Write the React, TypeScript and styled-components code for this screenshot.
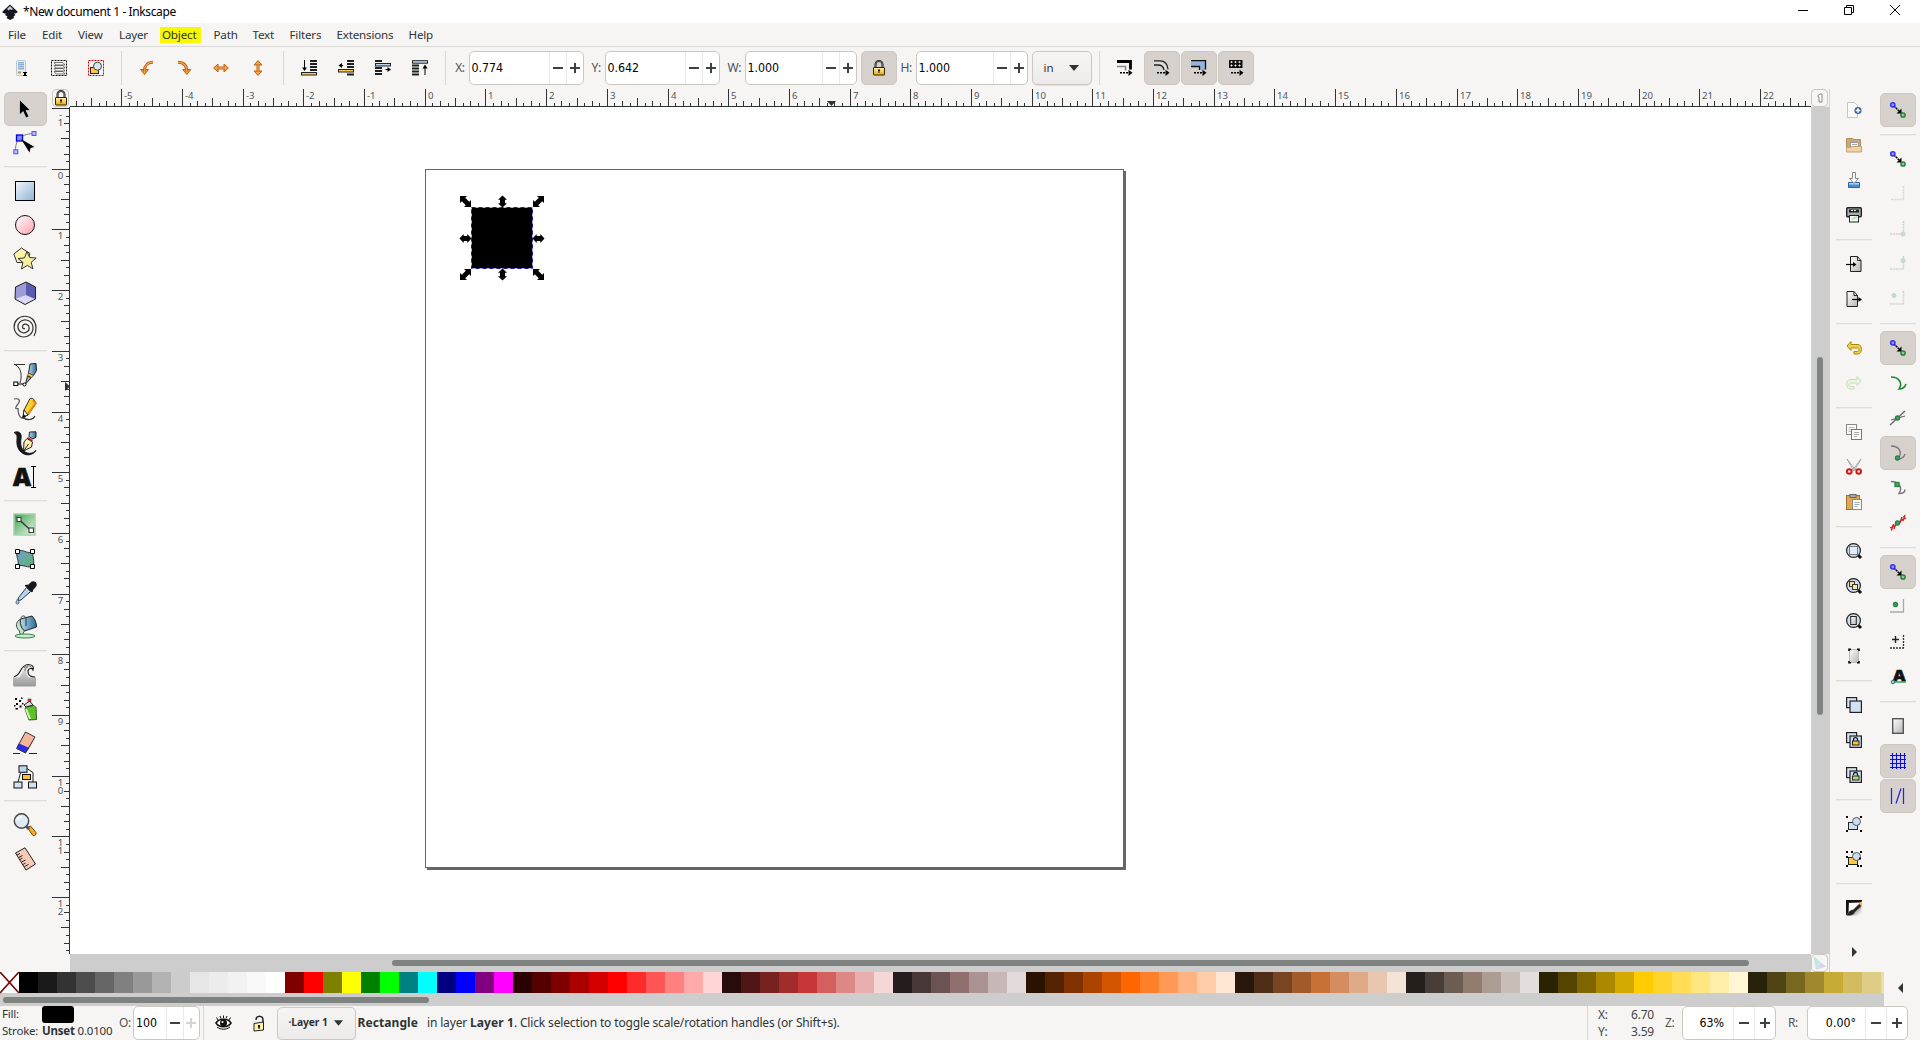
import React from 'react';
import styled, { createGlobalStyle, css } from 'styled-components';

const UI = `"Noto Sans", "Open Sans", sans-serif`;
const NUM = `"DejaVu Sans Condensed", "DejaVu Sans", sans-serif`;

const Global = createGlobalStyle`
  * { box-sizing: border-box; }
  body { margin: 0; background: #f6f5f4; }
  svg { display: block; flex: none; overflow: visible; }
`;

/* ---------- shell ---------- */
const Window = styled.div`
  width: 1920px; height: 1040px; display: flex; flex-direction: column; overflow: hidden;
  background: #f6f5f4; color: #2e3436; font: 12px/16px ${UI};
`;
const TitleBar = styled.header`
  height: 23px; flex: none; background: #fff; display: flex; align-items: center; padding-left: 2px; color: #000;
`;
const Title = styled.span`
  margin-left: 5px; flex: 1; font-size: 12px; letter-spacing: -0.38px; white-space: nowrap;
`;
const WindowButtons = styled.div`display: flex; width: 140px; height: 23px;`;
const WindowButton = styled.div`width: 46px; display: flex; justify-content: center; padding-top: 4px;`;
const MenuBar = styled.nav`
  height: 24px; flex: none; display: flex; align-items: center; border-bottom: 1px solid #dad8d5; padding: 0 0 0 5.5px;
`;
const MenuItem = styled.span<{ $w: number; $hot?: boolean }>`
  width: ${p => p.$w}px; height: 16px; line-height: 15px; margin-right: 10px; padding-left: 2.5px;
  font-size: 11.6px; letter-spacing: -0.18px; white-space: nowrap;
  ${p => p.$hot && css`background: #f8f800;`}
`;
const Toolbar = styled.div`height: 42px; flex: none; display: flex; align-items: center; padding: 0 0 0 3.5px;`;
const ToolButton = styled.div<{ $on?: boolean }>`
  width: 36px; height: 34px; margin-right: 1px; flex: none; display: flex; align-items: center; justify-content: center;
  border-radius: 5px; ${p => p.$on && css`background: #d6d1cd; border: 1px solid #cdc7c2;`}
`;
const VSep = styled.div<{ $m?: string }>`width: 1px; height: 34px; background: #d9d7d4; flex: none; margin: ${p => p.$m || '0 7px 0 6px'};`;
const Label = styled.span<{ $w: number }>`width: ${p => p.$w}px; flex: none; font-size: 12px; letter-spacing: -0.4px; color: #4c5356; white-space: nowrap;`;
const Spin = styled.div<{ $w: number; $mr?: number }>`
  width: ${p => p.$w}px; height: 34px; flex: none; display: flex; background: #fff; margin-right: ${p => p.$mr || 0}px;
  border: 1px solid #cdc7c2; border-radius: 5px; overflow: hidden;
`;
const SpinValue = styled.span<{ $right?: boolean }>`
  flex: 1; padding: 0 9px 0 2px; font: 12.3px/33px ${NUM}; color: #000; white-space: nowrap;
  text-align: ${p => (p.$right ? 'right' : 'left')};
`;
const SpinStep = styled.span<{ $w: number; $off?: boolean }>`
  width: ${p => p.$w}px; border-left: 1px solid #ebe9e7; display: flex; align-items: center; justify-content: center;
  color: ${p => (p.$off ? '#d3d2d0' : '#3b4143')};
`;
const Combo = styled.div<{ $w: number; $h: number }>`
  width: ${p => p.$w}px; height: ${p => p.$h}px; flex: none; display: flex; align-items: center; border: 1px solid #cdc7c2;
  border-radius: 5px; background: linear-gradient(#f6f5f4, #edebe9); box-shadow: 0 1px 1px rgba(0,0,0,.08);
`;
const UnitText = styled.span`width: 36px; padding-left: 11px; font-size: 11.6px;`;

/* ---------- workspace ---------- */
const Main = styled.main`height: 883px; flex: none; display: flex;`;
const Side = styled.aside<{ $w: number; $pad: string }>`
  width: ${p => p.$w}px; flex: none; display: flex; flex-direction: column; padding: ${p => p.$pad};
`;
const HSep = styled.div`height: 2px; margin: 6px 0; background: #dfddda; flex: none; border-bottom: 1px solid #eeedec;`;
const BoxTool = styled.div<{ $on?: boolean }>`
  height: 34px; flex: none; display: flex; align-items: center; justify-content: center; border-radius: 5px; padding-right: 1px;
  ${p => p.$on && css`background: #d6d1cd; border: 1px solid #cdc7c2;`}
`;
const SideButton = styled.div<{ $on?: boolean }>`
  height: 34px; margin-bottom: 1px; flex: none; display: flex; align-items: center; justify-content: center; border-radius: 5px;
  ${p => p.$on && css`background: #d6d1cd; border: 1px solid #cdc7c2;`}
`;
const Desk = styled.section`
  width: 1778px; flex: none; display: grid; grid-template-columns: 18px 1741px 19px; grid-template-rows: 18px 847px 18px;
  border-right: 1px solid #d5d0cc;
`;
const Corner = styled.div`
  width: 17px; height: 18px; border: 1px solid #cdc7c2; border-radius: 4px; background: #f6f5f4;
  display: flex; align-items: center; justify-content: center;
`;
const Canvas = styled.div`position: relative; background: #fff; overflow: hidden;`;
const Page = styled.div`
  position: absolute; left: 355px; top: 62px; width: 699px; height: 699px; background: #fff;
  border: 1px solid #666; box-shadow: 2px 2px 0 #666;
`;
const Selection = styled.svg`position: absolute; left: 388px; top: 87px;`;
const VTrack = styled.div`background: #cdcdcd; padding: 250px 0 0 6px;`;
const VThumb = styled.div`width: 6px; height: 358px; border-radius: 3px; background: #7e8281;`;
const HTrack = styled.div`background: #cdcdcd; padding: 6px 0 0 322px;`;
const HThumb = styled.div<{ $w: number }>`width: ${p => p.$w}px; height: 6px; border-radius: 3px; background: #7e8281;`;

/* ---------- bottom ---------- */
const PaletteRow = styled.div`height: 34px; flex: none; display: flex;`;
const PaletteView = styled.div`width: 1884px; overflow: hidden; background: #cdcdcd;`;
const Swatches = styled.div`display: flex; height: 21px; width: 1900px;`;
const Swatch = styled.div<{ $c: string }>`width: 19px; height: 21px; flex: none; background: ${p => p.$c};`;
const PaletteScroll = styled.div`height: 13px; padding: 4px 0 0 3px;`;
const PaletteMenu = styled.div`flex: 1; display: flex; justify-content: center; padding: 11px 3px 0 0;`;
const Status = styled.footer`height: 34px; flex: none; display: flex; align-items: center; white-space: nowrap;`;
const Style = styled.div`width: 119px; flex: none; height: 34px; padding-left: 2px; font-size: 11.5px; letter-spacing: -0.2px;`;
const StyleLine = styled.div`height: 17px; line-height: 15px; display: flex;`;
const StyleName = styled.span`width: 40px;`;
const FillSwatch = styled.span`width: 32px; height: 17px; border-radius: 3px; background: #000;`;
const LayerText = styled.b`font-size: 10.3px; letter-spacing: -0.1px; padding: 0 0 2px 10.5px; width: 56px;`;
const Hint = styled.div`
  width: 1231px; flex: none; padding: 0 0 0 1.5px; font-size: 12px; letter-spacing: -0.15px;
  b { letter-spacing: 0.08px; }
`;
const Gap = styled.span<{ $w: number }>`display: inline-block; width: ${p => p.$w}px;`;
const Coords = styled.div`width: 67px; flex: none; font-size: 12px; letter-spacing: -0.2px; padding-bottom: 1px;`;
const CoordLine = styled.div`display: flex; justify-content: space-between; line-height: 17px; padding: 0 11px 0 0; color: #3f4547;`;

const Minus = () => <svg width="12" height="12"><path d="M1 6h10" stroke="currentColor" strokeWidth="2" /></svg>;
const Plus = () => <svg width="12" height="12"><path d="M1 6h10M6 1v10" stroke="currentColor" strokeWidth="2" /></svg>;
const Down = ({ w = 10 }: { w?: number }) => <svg width={w} height="6" viewBox="0 0 10 6"><path d="M0 0h10L5 6z" fill="#2e3436" /></svg>;

type SpinProps = { w: number; value: string; step?: number; mr?: number; right?: boolean; off?: boolean };
const SpinBox = ({ w, value, step = 17, mr, right, off }: SpinProps) => (
  <Spin $w={w} $mr={mr}>
    <SpinValue $right={right}>{value}</SpinValue>
    <SpinStep $w={step}><Minus /></SpinStep>
    <SpinStep $w={step} $off={off}><Plus /></SpinStep>
  </Spin>
);

const Ico = ({ s = 16, children }: { s?: number; children: React.ReactNode }) => (
  <svg width={s} height={s} viewBox={`0 0 ${s} ${s}`} fill="none" stroke="none">{children}</svg>
);

const Defs = styled.svg`position: absolute; top: 0; left: 0;`;
const Gradients = () => (
  <Defs width="0" height="0">
    <defs>
      <linearGradient id="blue" x1="0" y1="0" x2="1" y2="1"><stop offset="0" stopColor="#f2f7fc" /><stop offset="1" stopColor="#8fb3d6" /></linearGradient>
      <linearGradient id="pink" x1="0" y1="0" x2="1" y2="1"><stop offset="0" stopColor="#fff" /><stop offset="1" stopColor="#ff9fae" /></linearGradient>
      <linearGradient id="green" x1="0" y1="0" x2="1" y2="1"><stop offset="0" stopColor="#3da04c" /><stop offset="1" stopColor="#eaf7ec" /></linearGradient>
      <linearGradient id="mesh" x1="0" y1="0" x2="1" y2="1"><stop offset="0" stopColor="#6d9fd0" /><stop offset="1" stopColor="#5fb36b" /></linearGradient>
      <linearGradient id="gold" x1="0" y1="0" x2="0" y2="1"><stop offset="0" stopColor="#fff3b0" /><stop offset="1" stopColor="#f0a800" /></linearGradient>
      <linearGradient id="grey" x1="0" y1="0" x2="1" y2="1"><stop offset="0" stopColor="#fff" /><stop offset="1" stopColor="#b5b5b5" /></linearGradient>
      <linearGradient id="wave" x1="0" y1="0" x2="0" y2="1"><stop offset="0" stopColor="#eee" /><stop offset="1" stopColor="#999" /></linearGradient>
      <linearGradient id="steel" x1="0" y1="0" x2="1" y2="0"><stop offset="0" stopColor="#b5dcf0" /><stop offset="1" stopColor="#2d6a96" /></linearGradient>
      <linearGradient id="ink" x1="0" y1="0" x2="1" y2="1"><stop offset="0" stopColor="#000" /><stop offset=".9" stopColor="#f0f0f0" /></linearGradient>
      <linearGradient id="cms" x1="0" y1="0" x2="1" y2="1"><stop offset="0" stopColor="#a9f0b4" /><stop offset=".5" stopColor="#c9e6f5" /><stop offset="1" stopColor="#ffb5c8" /></linearGradient>
    </defs>
  </Defs>
);

/* ---------- toolbar icons ---------- */
const Padlock = () => (
  <Ico><path d="M4.500 8V4.500a3.500 3.500 0 0 1 7 0V8" stroke="#222" strokeWidth="2" /><path d="M4.500 8V4.500a3.500 3.500 0 0 1 7 0V8" stroke="#aaa" strokeWidth=".5" /><rect x="2.500" y="7.500" width="11" height="7.500" rx=".5" fill="url(#gold)" stroke="#2a2310" /><path d="M7 9.500h2v1.500h-.5V13h-1v-2H7z" fill="#111" /></Ico>
);
const orangeArrow = (d: string, head: string) => (
  <Ico><path d={head} fill="#f7a340" stroke="#bd5f12" /><path d={d} stroke="#bd5f12" strokeWidth="3" /><path d={d} stroke="#f9b25c" strokeWidth="1.100" /></Ico>
);
const Shapes = ({ frame }: { frame?: boolean }) => (
  <>
    <rect x="2.500" y="6.500" width="9" height="7" fill={frame ? '#ffc93c' : '#cfe0f2'} stroke="#222" />
    <circle cx="10.500" cy="5.500" r="4" fill="#cbdced" stroke="#555" />
  </>
);
const lines = (x: number, w: number, ys: number[]) => ys.map(y => <rect key={y} x={x} y={y} width={w} height="2" fill="#1d2021" />);

const toolbarGroups: React.ReactNode[][] = [
  [
    <Ico><rect x="2.500" y=".5" width="9" height="15" rx="1" fill="#e9eff5" stroke="#b9c7d3" /><path d="M4 2.500h6M4 4.500h6M4 6.500h6M4 8.500h6" stroke="#8fb0ce" /><path d="M4 3.500h6M4 5.500h6M4 7.500h6M4 9.500h6" stroke="#b6cde2" /><rect x="4" y="11.500" width="3" height="2" fill="#c98e45" /><path d="M9 12h4v1h-1v2h1v1H9v-1h1v-2H9z" fill="#000" /></Ico>,
    <Ico><rect x=".5" y=".5" width="15" height="15" stroke="#000" strokeDasharray="2 1" /><path d="M3 11.500l2 2.500h9l-2-2.500zM3 8.500L5 11h9l-2-2.500zM3 5.500L5 8h9l-2-2.500zM3 2.500L5 5h9l-2-2.500z" fill="#f4f4f4" stroke="#555" strokeWidth=".8" /></Ico>,
    <Ico><rect x=".5" y=".5" width="15" height="15" stroke="#d40000" strokeDasharray="2 1" /><rect x="2.500" y="7.500" width="8" height="6" fill="#ffc93c" stroke="#222" /><circle cx="9.500" cy="6.200" r="4" fill="#d8e5f2" stroke="#444" /></Ico>,
  ],
  [
    orangeArrow('M14 2.300C8 2.300 5.500 5 5.500 11.500', 'M1.500 9.500l4 5 4-5z'),
    orangeArrow('M2 2.300C8 2.300 10.800 5 10.800 11.500', 'M6.800 9.500l4 5 4-5z'),
    orangeArrow('M4 8h8', 'M5 4L.6 8 5 12zM11 4L15.400 8 11 12z'),
    orangeArrow('M8 4v8', 'M4 5L8 .6 12 5zM4 11L8 15.400 12 11z'),
  ],
  [
    <Ico>{lines(9, 7, [0, 3, 6, 9])}<path d="M3.500 0v9" stroke="#000" /><path d="M1 7.500h5L3.500 11z" fill="#000" /><rect x=".5" y="12.500" width="15" height="2.500" fill="#ffc94f" stroke="#222" /></Ico>,
    <Ico>{lines(9, 7, [0, 3, 6])}{lines(9, 7, [13.500])}<path d="M1 5.500h4" stroke="#000" /><path d="M4 3L.5 5.500 4 8z" fill="#000" /><rect x=".5" y="9.500" width="15" height="2.500" fill="#ffc94f" stroke="#222" /></Ico>,
    <Ico>{lines(0, 7, [0, 7, 10, 13])}<rect x=".5" y="3.500" width="15" height="2.500" fill="#b8d3ee" stroke="#222" /><path d="M10.500 9.500h4" stroke="#000" /><path d="M12.500 7l3.500 2.500L12.500 12z" fill="#000" /></Ico>,
    <Ico>{lines(0, 7, [4.500, 7.500, 10.500, 13.500])}<rect x=".5" y=".7" width="15" height="2.500" fill="#c9def2" stroke="#222" /><path d="M13 15V6" stroke="#000" /><path d="M10.500 8.500h5L13 4.500z" fill="#000" /></Ico>,
  ],
];
const DashArrow = () => <><path d="M3 12.800h10" stroke="#000" strokeWidth="1.500" strokeDasharray="2 1" /><path d="M11.500 9.700l4 3.100-4 3.100z" fill="#000" /></>;
const affect: { on: boolean; icon: React.ReactNode }[] = [
  { on: false, icon: <Ico><path d="M0 1.500h13.500v8" stroke="#000" strokeWidth="2.800" /><path d="M0 6.500h8.500v4" stroke="#888" strokeWidth="1.600" /><DashArrow /></Ico> },
  { on: true, icon: <Ico><path d="M0 .8h6c5 0 7.500 3 8 8.500M0 5h4c4 0 5.500 2 6 5" stroke="#222" strokeWidth="1.300" /><path d="M0 2.900h5c5 0 6.500 3 7 7" stroke="#e4e1de" strokeWidth="1.400" /><DashArrow /></Ico> },
  { on: true, icon: <Ico><path d="M0 3.500h11.500V10" stroke="#93b5dc" strokeWidth="5" /><path d="M0 .7h14.500V9.500M0 6.500h8.500v3.500" stroke="#111" strokeWidth="1.300" /><DashArrow /></Ico> },
  { on: true, icon: <Ico><rect x="1" y="0" width="13.500" height="8" fill="#111" /><path d="M3.500 1l1 1-1 1-1-1zM7.500 1l1 1-1 1-1-1zM11.500 1l1 1-1 1-1-1zM3.500 4.500l1 1-1 1-1-1zM7.500 4.500l1 1-1 1-1-1zM11.500 4.500l1 1-1 1-1-1z" fill="#fff" stroke="#fff" strokeWidth=".3" /><DashArrow /></Ico> },
];

/* ---------- toolbox icons ---------- */
const toolbox: React.ReactNode[][] = [
  [
    <Ico s={24}><path d="M6.500 2.500v15.500l3.500-3.500 3 6.500 3-1.500-3-6h4.500z" fill="#000" stroke="#fff" strokeWidth=".6" /></Ico>,
    <Ico s={24}><path d="M2.500 19C2.500 11 6 3 20.500 2.500" stroke="#777" /><rect x=".8" y="18.800" width="4" height="4" fill="#b9b9ff" stroke="#5555ee" /><rect x="19" y=".5" width="4" height="4" fill="#b9b9ff" stroke="#5555ee" /><rect x="3.500" y="4" width="6" height="6" fill="#8888ff" stroke="#0000e6" strokeWidth="1.300" /><path d="M8 8l13.500 8-4 1-1 4.500z" fill="#000" /></Ico>,
  ],
  [
    <Ico s={24}><rect x="2.500" y="2.500" width="19" height="19" fill="url(#blue)" stroke="#000" /></Ico>,
    <Ico s={24}><circle cx="12" cy="12" r="9.500" fill="url(#pink)" stroke="#111" /></Ico>,
    <Ico s={24}><path d="M8.500 1l8.500 5.500-3 9H4L.8 7z" fill="#fdf2a8" stroke="#333" /><path d="M14 4.500l2.600 6 6.600.5-5 4.300 1.700 6.500-5.600-3.400L8.500 22l1.400-6.600L5 11.500l6.500-.6z" fill="#fbf0a0" stroke="#333" /></Ico>,
    <Ico s={24}><path d="M13 1l9.500 5v12L12 23.500 2 18 2.500 6z" fill="#7d7dc8" /><path d="M13 1v13L2.500 18V6z" fill="#9c9cd6" /><path d="M13 14l9.500 4L12 23.500 2 18z" fill="#dadaf7" /><path d="M13 1l9.500 5v12L13 14z" fill="#5b5bb0" /><path d="M13 1l9.500 5v12L12 23.500 2 18 2.500 6z" stroke="#222" /></Ico>,
    <Ico s={24}><path d="M12 13.500c-2 .8-3.300-1.500-2-3.300 1.800-2.200 6-1 6.200 2.500.2 4-4.200 6.200-7.700 4.600C4.300 15.300 4 10 6.500 7.300 10 3.500 16.500 4.500 19 8.700c2 4 1 8.500-2 11-4 3-9 3-12.500-.2C0 15.500.2 8.500 4 4.500 8 .5 15 0 19.500 4c4.500 4.500 4.300 12 1.500 17" stroke="#333" strokeWidth="1.200" /></Ico>,
  ],
  [
    <Ico s={24}><path d="M1 1.500h11M2 1.500C9 5 9 14 7 20" stroke="#333" /><rect x=".8" y="19" width="4" height="3.500" fill="#fff" stroke="#000" /><path d="M5 21h6" stroke="#000" /><circle cx="11.500" cy="21.500" r="1.500" fill="#fff" stroke="#000" /><path d="M17 1l6-.5.500 7-3 5-5-2z" fill="url(#steel)" stroke="#222" /><path d="M15.500 10l5 2.500-1.500 2-4.500-2z" fill="#ffcc33" stroke="#333" strokeWidth=".7" /><path d="M14.500 13l3.500 2-5.500 6z" fill="#aaa" stroke="#222" /></Ico>,
    <Ico s={24}><path d="M1 2c5-1 7 1 4 5-3 3.500-3 5.500 0 4.500M5 11c0 12 7 12 8 7" stroke="#555" strokeWidth="1.200" /><path d="M9 20c5 4 11 3 13-1" stroke="#333" strokeWidth="1.200" /><path d="M17 1.500c3-1 5 2 6 5L15 18l-4.500 1 .5-6z" fill="#ffcf2e" stroke="#333" /><path d="M20 3l2.500 3.500L15 17" stroke="#e08a00" strokeWidth="2" /><path d="M11 13l4 5-5 2z" fill="#fff" stroke="#222" /><path d="M10.700 17l2 2.500-3 .8z" fill="#000" /></Ico>,
    <Ico s={24}><path d="M1 1.500c5-2 8 1 7 6-1 6 0 11 5 14 3 1.500 7 1 10-2-3 4.500-9 5.500-13 3C5 19.500 3.500 14 4 9c.5-4 0-6-3-7.500z" fill="#1a1a1a" stroke="#111" /><path d="M16.500 1L23 .8V6l-3 2-4-2.500z" fill="url(#steel)" stroke="#222" /><path d="M15 6l5 3-1 1.500-5-3z" fill="#c22" /><path d="M14 7.500l5.500 3.500-1 5-8 4 .5-9z" fill="#fff0b0" stroke="#222" /><path d="M11 19.500l4.500-6.500" stroke="#222" /></Ico>,
    <svg width="24" height="24" viewBox="0 0 24 24"><text x="0" y="20.500" fontFamily="Noto Sans" fontWeight="900" fontSize="24" fill="#111" stroke="#111" strokeWidth=".7" textLength="18" lengthAdjust="spacingAndGlyphs">A</text><path d="M18 1.500h5M18 22.500h5M20.500 2v20" stroke="#000" fill="none" /></svg>,
  ],
  [
    <Ico s={24}><rect x="1" y="1" width="21" height="21" fill="url(#green)" stroke="#9fd4a8" strokeWidth="1.500" /><path d="M6 6.500l12 11" stroke="#333" strokeWidth="1.300" /><rect x="4" y="4.500" width="4" height="4" fill="#fff" stroke="#333" /><rect x="16" y="15" width="4.500" height="4.500" fill="#fff" stroke="#333" /></Ico>,
    <Ico s={24}><path d="M4.500 4.500C10 1 14 8 20 4.500c-1 5 2 9 0 14.500-5 3-9-2-15.500 0C7 14 2 9 4.500 4.500z" fill="url(#mesh)" stroke="#334" /><path d="M2.500 2.500h4v4h-4zM17.500 2.500h4v4h-4zM2.500 17.500h4v4h-4zM17.500 17.500h4v4h-4z" fill="#fff" stroke="#000" /></Ico>,
    <Ico s={24}><path d="M16 4c2-4 5-3.500 6.500-2.500 1.500 2 .5 5-2.500 6.500l-1 3-7-6.500z" fill="#16181c" stroke="#111" /><path d="M13.500 6.500l4 4L8 19l-3 .5.500-3z" fill="#b8d2ee" stroke="#2b3a4c" /><path d="M4.500 18c1.200 2 1.800 3 1.500 4-.5 1.500-2.700 1.500-3 0-.2-1 .5-2 1.500-4z" fill="#8fb8e0" stroke="#456" strokeWidth=".7" /></Ico>,
    <Ico s={24}><path d="M7.500 4L19 1c3 3 4.500 7 4.500 11l-12 4C8 13 6.500 8 7.500 4z" fill="url(#steel)" stroke="#222" /><path d="M7.500 4c-5 3-5.500 8-1 12-.5 2 1 4 4 4.500-1-2 0-3.500 1-4.500C8 13 6.500 8 7.500 4z" fill="#bfe4c6" stroke="#222" strokeWidth=".8" /><ellipse cx="12" cy="21" rx="10" ry="2" fill="#c5ecca" stroke="#3f7f4a" /><path d="M8 3c1-3 4-2.500 5 0v8" stroke="#333" /></Ico>,
  ],
  [
    <Ico s={24}><path d="M.8 14.500h4c5-1 5-12 11-13-1 2-5 8 0 13h6.500V23H.8z" fill="url(#wave)" /><path d="M.8 14.500V23h21.500v-8.500" stroke="#999" /><path d="M1 13.500C8 13.500 7 1.500 15 1.500c4 0 6.500 2.500 5 5.500-1-2.500-5-2-5 1.500s3 5.500 7 5.500" stroke="#222" strokeWidth="1.200" /><path d="M11 5c3-3 6-2.500 7.500-.5M12 8c0-2 1-3.500 3-4" stroke="#555" strokeWidth=".9" /></Ico>,
    <Ico s={24}><path d="M13 10l8-1.500 2 2 .5 12-7.500.5-4-11z" fill="#5fc22b" stroke="#2f5d17" /><path d="M13 12l4 10" stroke="#d3f5b9" strokeWidth="2" /><path d="M11 8l5.500-4 3.500 4-7 2z" fill="#ddd" stroke="#222" /><rect x="15" y="2" width="3" height="2.500" fill="#e33" stroke="#222" strokeWidth=".5" /><path d="M2 1h2v2H2zM6 3h2v2H6zM3 6h2v2H3zM6.500 8.500h2v2h-2zM1 8h1.500v1.500H1zM8 .5h1.500V2H8zM9 6h1.500v1.500H9zM2.500 11H5v1.500H2.500z" fill="#000" /></Ico>,
    <Ico s={24}><path d="M12.500 1l9.500 5-5 11-12-3.500z" fill="#f5b69c" /><path d="M6 12.500l10.500 4.500-4 5-9-4.500z" fill="#2c2ce8" /><path d="M12.500 1l9.500 5-9.500 16-9-4.500z" stroke="#333" /><path d="M0 22.500h7M16 22.500h8" stroke="#222" /></Ico>,
    <Ico s={24}><path d="M5 17l2.500-9M14 3.500l6 4V17" stroke="#222" /><rect x="6" y=".8" width="8" height="6.500" fill="#bcd4ee" stroke="#111" /><rect x="9.500" y="9.500" width="8" height="5" fill="#ffbe2e" stroke="#111" /><rect x="1" y="17" width="8" height="6" fill="#cfe1f3" stroke="#111" /><rect x="15.500" y="17" width="8" height="6" fill="#cfe1f3" stroke="#111" /></Ico>,
  ],
  [
    <Ico s={24}><path d="M14.500 15l3-2 5.500 6.500c.5 2-1 3.500-3 3z" fill="#f8ac26" stroke="#6b4a10" /><path d="M13 13l3 3" stroke="#555" strokeWidth="3" /><circle cx="8.500" cy="8" r="7.200" fill="#dfeaf5" stroke="#444" strokeWidth="1.400" /><path d="M4 7c1-2.500 3-3 5-3" stroke="#fff" strokeWidth="1.500" /></Ico>,
    <Ico s={24}><path d="M2.500 6L12 .8 22.500 17 13 23z" fill="#f8cbb8" stroke="#222" /><path d="M4 8l3-1.500M5.500 10.500l4-2M7 12.500L9.500 11M8.500 15l4-2M10 17.500l2.500-1.500M11.500 19.500l4-2" stroke="#222" /></Ico>,
  ],
];

/* ---------- command icons ---------- */
const Lens = ({ children }: { children?: React.ReactNode }) => (
  <Ico><path d="M12 12l3 3" stroke="#111" strokeWidth="3" /><circle cx="7.500" cy="7.500" r="6.900" fill="#cfdff0" stroke="#222" strokeWidth="1.200" />{children}</Ico>
);
const Clones = ({ children }: { children?: React.ReactNode }) => (
  <Ico><rect x=".6" y=".6" width="10" height="10" fill="#d8e6f3" stroke="#222" strokeWidth="1.200" /><rect x="4" y="4" width="11.400" height="11.400" fill="#cfe1f3" stroke="#222" strokeWidth="1.200" />{children}</Ico>
);
const Handles = () => <path d="M0 0h2v2H0zM14 0h2v2h-2zM0 14h2v2H0zM14 14h2v2h-2z" fill="#000" />;
const PageGlyph = () => <path d="M4.500.5h7l3.500 4v11H4.500zM11.500.5v4H15" fill="url(#grey)" stroke="#222" />;

const commands: React.ReactNode[][] = [
  [
    <Ico><path d="M1.500.5h7l3 3v12h-10z" fill="#fcfcfc" stroke="#c4c4c4" /><circle cx="12" cy="8.500" r="3.600" fill="#3465a4" /><path d="M12 6.200v4.600M9.700 8.500h4.600" stroke="#fff" strokeWidth="1.500" /></Ico>,
    <Ico><path d="M.5 1.500h6l1.500 1h6.500v12H.5z" fill="#c9a978" stroke="#b08f5c" /><path d="M4.500 5.500h8v6h-8z" fill="#fff" stroke="#999" /><path d="M6 7.500h5" stroke="#aaa" /><path d="M.5 10.500h4l1-1H15.500v5.500H.5z" fill="#ecd1a9" stroke="#c4a273" /></Ico>,
    <Ico><path d="M2.500 10.500h11v5h-11z" fill="#4b8ad6" stroke="#2e62a3" /><path d="M3 11h10v1.500H3z" fill="#b6d0ee" /><path d="M6.500.5h3v6h3L8 11.500 3.500 6.500h3z" fill="#fafafa" stroke="#888" /></Ico>,
    <Ico><rect x=".7" y=".7" width="14.600" height="9" rx="1" fill="#a9acac" stroke="#222" strokeWidth="1.400" /><path d="M3 4h10" stroke="#222" strokeWidth="3" /><path d="M5 3.500h5" stroke="#eee" strokeDasharray="2 1" /><rect x="3.500" y="8.500" width="9" height="6.500" fill="#f4fbf1" stroke="#222" /><path d="M6 12l5-2" stroke="#bfe0b5" strokeWidth="2" /></Ico>,
  ],
  [
    <Ico><PageGlyph /><path d="M0 8.500h8" stroke="#000" strokeWidth="1.200" /><path d="M7 6l3.500 2.500L7 11z" fill="#000" /></Ico>,
    <Ico><g transform="translate(-3.500 0)"><PageGlyph /></g><path d="M6 8.500h8" stroke="#000" strokeWidth="1.200" /><path d="M12.500 6L16 8.500 12.500 11z" fill="#000" /></Ico>,
  ],
  [
    <Ico><path d="M5 1.500L1 6l4 4.500V8h6.500c2 0 2 3.500 0 3.500H8V14h4c4.500 0 4.500-9.500 0-9.500H5z" fill="#f0d04a" stroke="#a98a0c" /></Ico>,
    <Ico><path d="M11 1.500L15 6l-4 4.500V8H4.500c-2 0-2 3.500 0 3.500H8V14H4C-.5 14-.5 4.500 4 4.500h7z" fill="#e9f4e1" stroke="#c6dfba" /></Ico>,
  ],
  [
    <Ico><rect x=".5" y=".5" width="10" height="10" fill="#fafafa" stroke="#888" /><path d="M2.500 3.500h6M2.500 5.500h4M2.500 7.500h3" stroke="#bbb" /><rect x="5.500" y="5.500" width="10" height="10" fill="#fafafa" stroke="#777" /><path d="M8 8.500h5M8 10.500h5M8 12.500h3" stroke="#aaa" /></Ico>,
    <Ico><path d="M1 0l8.500 11-2 .5zM15 0L6.500 11l2 .5z" fill="#eee" stroke="#999" strokeWidth=".8" /><circle cx="3.300" cy="12.500" r="2.300" stroke="#d01818" strokeWidth="2" /><circle cx="12.700" cy="12.500" r="2.300" stroke="#d01818" strokeWidth="2" /></Ico>,
    <Ico><rect x=".5" y="1.500" width="13" height="14" fill="#e3a853" stroke="#a3702a" /><rect x="4" y=".5" width="6" height="3" fill="#aaa" stroke="#666" /><rect x="6.500" y="5.500" width="9" height="10" fill="#fafafa" stroke="#888" /><path d="M8.500 8.500h5M8.500 10.500h5M8.500 12.500h3" stroke="#aaa" /></Ico>,
  ],
  [
    <Lens><rect x="3.500" y="3.500" width="8" height="8" fill="#e3ecf6" stroke="#111" strokeDasharray="1 1" /></Lens>,
    <Lens><rect x="3.500" y="3.500" width="5" height="5" fill="#ffe07a" stroke="#333" /><rect x="6.500" y="6.500" width="5" height="5" fill="#ffe9a0" stroke="#333" /></Lens>,
    <Lens><rect x="4.700" y="3.500" width="5.600" height="8" fill="url(#grey)" stroke="#222" /></Lens>,
    <Ico><rect x="3.500" y="1.500" width="9" height="13" fill="url(#grey)" stroke="#bbb" /><path d="M3 3V1.200h2M13 3V1.200h-2M3 13v1.800h2M13 13v1.800h-2" stroke="#000" strokeWidth="1.500" /></Ico>,
  ],
  [
    <Clones />,
    <Clones><path d="M7.500 9V7.500c0-2.500 4-2.500 4 0V9" stroke="#222" strokeWidth="1.300" /><rect x="6.500" y="9" width="6.500" height="4" fill="#ffc52e" stroke="#222" /></Clones>,
    <Clones><path d="M7.500 8V7c0-2 4-2 4 0v2" stroke="#222" strokeWidth="1.300" /><rect x="6.500" y="9" width="6.500" height="4" fill="#b5dc6e" stroke="#222" /></Clones>,
  ],
  [
    <Ico><Handles /><Shapes /></Ico>,
    <Ico><Handles /><Shapes frame /><path d="M5 0h2v2H5zM13 6.500h2v2h-2zM0 5h2v2H0zM11 14h2v2h-2z" fill="#000" /></Ico>,
  ],
  [<Ico><rect x=".5" y=".5" width="15" height="15" fill="url(#ink)" /><path d="M0 0h16v2H0zM0 0h2v15H0z" fill="#111" /><path d="M3 3h11L7 9.500C5 10.500 4 12 3 13z" fill="#fdfdfd" /><path d="M1 15.500c1-4 4-6 6-5.500L14 3.500l1.500 2.500L9 12c-1 3-5 4-8 3.500z" fill="#222" stroke="#888" strokeWidth=".5" /><path d="M13 3.500l3-2.500v6z" fill="#ffb52e" /></Ico>],
];

/* ---------- snap icons ---------- */
const SnapMain = () => (
  <Ico><path d="M4 4l7 7" stroke="#000" strokeWidth="1.500" strokeDasharray="2 .6" /><path d="M11.500 6.500v5h-5z" fill="#000" /><circle cx="2.800" cy="2.800" r="2.100" fill="#9a9aff" stroke="#3333e6" strokeWidth="1.500" /><circle cx="13" cy="13" r="2.100" fill="#8fc79a" stroke="#2a8136" strokeWidth="1.500" /></Ico>
);
const node = (x: number, y: number) => <circle cx={x} cy={y} r="2" fill="#5c8f9c" stroke="#1f8a2f" strokeWidth="1.300" />;
const snap: { on?: boolean; icon: React.ReactNode }[][] = [
  [{ on: true, icon: <SnapMain /> }],
  [
    { icon: <SnapMain /> },
    { icon: <Ico><path d="M13.500 0v14M1 13.500h13" stroke="#cfe0d0" strokeWidth="1.600" strokeDasharray="2 .8" /></Ico> },
    { icon: <Ico><path d="M13.500 0v14M0 13h13" stroke="#cfcfcf" strokeWidth="1.500" strokeDasharray="2 .8" /><circle cx="13" cy="13" r="2.500" fill="#c5dccd" /></Ico> },
    { icon: <Ico><path d="M13.500 0v14M0 13h13" stroke="#d2d2d2" strokeWidth="1.500" strokeDasharray="2 .8" /><circle cx="13" cy="4.500" r="2.500" fill="#c5dccd" /></Ico> },
    { icon: <Ico><path d="M13.500 0v14M0 13h13" stroke="#d2d2d2" strokeWidth="1.500" strokeDasharray="2 .8" /><circle cx="4" cy="4.500" r="2" fill="#c5dccd" stroke="#b8dcc0" /></Ico> },
  ],
  [
    { on: true, icon: <SnapMain /> },
    { icon: <Ico><path d="M1 2c8 0 12 6 8 12 4 0 6-2 7-5" stroke="#1c8a2b" strokeWidth="1.600" /></Ico> },
    { icon: <Ico><path d="M0 15L15 1M1 10l14-4" stroke="#666" strokeWidth="1.300" />{node(7.500, 8)}</Ico> },
    { on: true, icon: <Ico><path d="M1 1c8 0 12 6 7 13 4 0 6-2 7-5" stroke="#777" strokeWidth="1.300" />{node(7.500, 13)}</Ico> },
    { icon: <Ico><path d="M1 1.500c8 0 12 6 8 12 4 0 6-2 6-4" stroke="#777" strokeWidth="1.400" /><rect x="5" y="2.500" width="4" height="4" fill="#5c8f9c" stroke="#1f8a2f" strokeWidth="1.300" /></Ico> },
    { icon: <Ico><path d="M1 16L15 0" stroke="#777" strokeDasharray="2 1" /><path d="M1.500 15l2-6M4 14l2-6M10 8l2-6M13 6l2-6M0 13l6-3M10 6l6-3" stroke="#d02020" strokeWidth="1.300" />{node(7.500, 8)}</Ico> },
  ],
  [
    { on: true, icon: <SnapMain /> },
    { icon: <Ico><path d="M13.500 0v13M0 13h14" stroke="#aaa" strokeWidth="1.300" />{node(5.500, 5.500)}</Ico> },
    { icon: <Ico><path d="M13.500 1v13M0 14h14" stroke="#333" strokeWidth="1.300" strokeDasharray="2 1" /><path d="M5.500 2v7M2 5.500h7" stroke="#222" strokeWidth="1.400" /></Ico> },
    { icon: <Ico><path d="M1 13h15" stroke="#3fa34d" strokeWidth="1.500" /><text x="3" y="12.300" fontFamily="Noto Sans" fontWeight="900" fontSize="16" fill="#111" stroke="#111" strokeWidth=".6" textLength="12.500" lengthAdjust="spacingAndGlyphs">A</text><circle cx="3" cy="13" r="1.800" fill="#9fc6b8" stroke="#2a7a8a" /></Ico> },
  ],
  [
    { icon: <Ico><rect x="2.700" y=".7" width="10.600" height="14.600" fill="url(#grey)" stroke="#555" strokeWidth="1.400" /></Ico> },
    { on: true, icon: <Ico><path d="M2.500 0v16M6.500 0v16M10.500 0v16M14.500 0v16M0 2.500h16M0 6.500h16M0 10.500h16M0 14.500h16" stroke="#0a0af0" /></Ico> },
    { on: true, icon: <Ico><path d="M1.500 0v16M13.500 0v16M6 15.500L11 .5" stroke="#2020f0" strokeWidth="1.200" /></Ico> },
  ],
];

/* ---------- rulers ---------- */
const INCH = 60.69;
const tickLen = (i: number) => (i % 8 === 0 ? 18 : i % 4 === 0 ? 9 : i % 2 === 0 ? 6 : 4);
const RulerText = styled.text`font: 9.6px ${UI}; fill: #4f575a;`;

const HRuler = () => {
  const ticks = [];
  for (let i = -46; i <= 182; i++) {
    const x = Math.floor(355.3 + (i * INCH) / 8);
    if (x < 3 || x > 1740) continue;
    const l = tickLen(i);
    ticks.push(<rect key={i} x={x} y={18 - l} width="1" height={l} fill="#2e3436" />);
    if (i % 8 === 0) ticks.push(<RulerText key={`t${i}`} x={x + 3} y="10">{i / 8}</RulerText>);
  }
  return (
    <svg width="1741" height="18">{ticks}<rect y="17" width="1741" height="1" fill="#2e3436" /><path d="M757 12h9l-4.500 5z" fill="#2e3436" /></svg>
  );
};
const VRuler = () => {
  const ticks = [];
  for (let i = -8; i <= 104; i++) {
    const y = Math.floor(62.3 + (i * INCH) / 8);
    if (y < 0 || y > 846) continue;
    const l = i % 8 !== 0 && i % 2 === 0 && i % 4 !== 0 ? 6 : tickLen(i);
    ticks.push(<rect key={i} y={y} x={18 - l} height="1" width={l} fill="#2e3436" />);
    if (i % 8 === 0)
      String(i / 8).split('').forEach((c, k) => ticks.push(
        <RulerText key={`t${i}-${k}`} x="8.500" y={y + 9.5 + k * 8} textAnchor="middle">{c}</RulerText>,
      ));
  }
  return (
    <svg width="18" height="847">{ticks}<rect x="17" width="1" height="847" fill="#2e3436" /><path d="M13 275v9l5-4.500z" fill="#2e3436" /></svg>
  );
};

/* ---------- selection handles ---------- */
const straight = 'M0 -6L4.500 -1.800H2.500V1.800H4.500L0 6L-4.500 1.800H-2.500V-1.800H-4.500Z';
const diagonal = 'M-5.500 -5.500H1.500L-.3 -3.700L3.700 .3L5.500 -1.500V5.500H-1.500L.3 3.700L-3.700 -.3L-5.500 1.500Z';
const handles: [number, number, number, string][] = [
  [7.5, 7.5, 0, diagonal], [44.5, 7.5, 0, straight], [80.5, 7.5, 90, diagonal],
  [7.5, 44.5, 90, straight], [80.5, 44.5, 90, straight],
  [7.5, 80.5, 90, diagonal], [44.5, 80.5, 0, straight], [80.5, 80.5, 0, diagonal],
];

const palette = (
  '000 1a1a1a 333 4d4d4d 666 808080 999 b3b3b3 ccc e6e6e6 ececec f2f2f2 f9f9f9 fff ' +
  '800000 f00 808000 ff0 008000 0f0 008080 0ff 000080 00f 800080 f0f ' +
  '2b0000 500 800000 a00 d40000 f00 ff2a2a f55 ff8080 faa ffd5d5 ' +
  '280b0b 501616 782121 a02c2c c83737 d35f5f de8787 e9afaf f4d7d7 ' +
  '241c1c 483737 6c5353 916f6f ac9393 c8b7b7 e3dbdb ' +
  '2b1100 520 803300 a40 d45500 f60 ff7f2a f95 ffb380 fca ffe6d5 ' +
  '28170b 502d16 784421 a05a2c c87137 d38d5f deaa87 e9c6af f4e3d7 ' +
  '241f1c 483e37 6c5d53 917c6f ac9d93 c8beb7 e3dedb ' +
  '2b2200 540 806600 a80 d4aa00 fc0 ffd42a fd5 ffe680 fea fff6d5 ' +
  '28220b 504416 786721 a0892c c8ab37 d3bc5f decd87 e9ddaf'
).split(' ');

const menus: [string, number][] = [
  ['File', 24], ['Edit', 26], ['View', 31], ['Layer', 33], ['Object', 41.5], ['Path', 29], ['Text', 27], ['Filters', 37], ['Extensions', 62], ['Help', 34],
];

export default function App() {
  return (
    <Window>
      <Global />
      <Gradients />
      <TitleBar>
        <Ico><path d="M8 .5l7.500 7c.5 1.500-2 2-3.500 2l1.500 1.500-2 1.500.5 1.500-4 2-3.500-2 1-1.500-2.500-1.500 1-1.500C2 9.500 0 9 .5 7.500z" fill="#15171c" /><path d="M8 2l3 3-1.500 1-1.500-.7L6.500 6.500 5 5z" fill="#c9cedb" /></Ico>
        <Title>*New document 1 - Inkscape</Title>
        <WindowButtons>
          <WindowButton><svg width="12" height="12"><path d="M1 6.500h10" stroke="#000" /></svg></WindowButton>
          <WindowButton><svg width="12" height="12" fill="none" stroke="#000"><path d="M1.500 3.500h7v7h-7zM3.500 3.500v-2h7v7h-2" /></svg></WindowButton>
          <WindowButton><svg width="12" height="12" stroke="#000"><path d="M1 1l10 10M11 1L1 11" /></svg></WindowButton>
        </WindowButtons>
      </TitleBar>
      <MenuBar>{menus.map(([m, w]) => <MenuItem key={m} $w={w} $hot={m === 'Object'}>{m}</MenuItem>)}</MenuBar>
      <Toolbar>
        {toolbarGroups.map((g, i) => (
          <React.Fragment key={i}>{g.map((icon, k) => <ToolButton key={k}>{icon}</ToolButton>)}<VSep /></React.Fragment>
        ))}
        <Label $w={16}>&nbsp;X:</Label><SpinBox w={115} value="0.774" mr={8} />
        <Label $w={13}>Y:</Label><SpinBox w={115} value="0.642" mr={8} />
        <Label $w={17}>W:</Label><SpinBox w={112} value="1.000" mr={4} />
        <ToolButton $on><Padlock /></ToolButton>
        <Gap $w={3} /><Label $w={15}>H:</Label><SpinBox w={112} value="1.000" mr={4} />
        <Combo $w={60} $h={34}><UnitText>in</UnitText><Down /></Combo>
        <VSep $m="0 7px 0 7px" />
        {affect.map((a, i) => <ToolButton key={i} $on={a.on}>{a.icon}</ToolButton>)}
      </Toolbar>

      <Main>
        <Side $w={52} $pad="3px 5px 0 4px">
          {toolbox.map((g, i) => (
            <React.Fragment key={i}>{i > 0 && <HSep />}{g.map((icon, k) => <BoxTool key={k} $on={!i && !k}>{icon}</BoxTool>)}</React.Fragment>
          ))}
        </Side>
        <Desk>
          <Corner><Padlock /></Corner>
          <HRuler />
          <Corner><svg width="12" height="12"><path d="M4 3.500l2-1.500h2v8H5V5H4z" fill="#fff" stroke="#888" /></svg></Corner>
          <VRuler />
          <Canvas>
            <Page />
            <Selection width="90" height="90">
              <rect x="13.500" y="14" width="61" height="60.500" fill="#000" />
              <rect x="13.500" y="13.500" width="61" height="61" fill="none" stroke="#b8b8d8" />
              <rect x="13.500" y="13.500" width="61" height="61" fill="none" stroke="#1a1aa0" strokeDasharray="4 3" />
              {handles.map(([x, y, r, d], i) => <path key={i} d={d} transform={`translate(${x} ${y}) rotate(${r})`} fill="#000" />)}
            </Selection>
          </Canvas>
          <VTrack><VThumb /></VTrack>
          <span />
          <HTrack><HThumb $w={1357} /></HTrack>
          <Corner><Ico><path d="M1.500 1L14 11.500 4 15z" fill="url(#cms)" /></Ico></Corner>
        </Desk>
        <Side $w={48} $pad="4px 6px 0 6px">
          {commands.map((g, i) => (
            <React.Fragment key={i}>{i > 0 && <HSep />}{g.map((icon, k) => <SideButton key={k}>{icon}</SideButton>)}</React.Fragment>
          ))}
          <SideButton><Gap $w={1} /><svg width="5" height="26"><path d="M0 17v10l5-5z" fill="#2e3436" /></svg></SideButton>
        </Side>
        <Side $w={42} $pad="4px 4px 0 2px">
          {snap.map((g, i) => (
            <React.Fragment key={i}>{i > 0 && <HSep />}{g.map((b, k) => <SideButton key={k} $on={b.on}>{b.icon}</SideButton>)}</React.Fragment>
          ))}
        </Side>
      </Main>

      <PaletteRow>
        <PaletteView>
          <Swatches>
            <Swatch $c="#fff"><svg width="19" height="21"><path d="M0 0l19 21M19 0L0 21" stroke="#7a0c0c" strokeWidth="1.700" /></svg></Swatch>
            {palette.map((c, i) => <Swatch key={i} $c={`#${c}`} />)}
          </Swatches>
          <PaletteScroll><HThumb $w={426} /></PaletteScroll>
        </PaletteView>
        <PaletteMenu><svg width="5" height="10"><path d="M5 0v10L0 5z" fill="#2e3436" /></svg></PaletteMenu>
      </PaletteRow>

      <Status>
        <Style>
          <StyleLine><StyleName>Fill:</StyleName><FillSwatch /></StyleLine>
          <StyleLine><StyleName>Stroke:</StyleName><b>Unset</b>&nbsp;0.0100</StyleLine>
        </Style>
        <Label $w={14}>O:</Label>
        <SpinBox w={67} value="100" off />
        <VSep $m="0 11px 0 3px" />
        <svg width="17" height="16" viewBox="0 0 17 16" fill="none"><path d="M1 8c3-5 12-5 15 0-3 5-12 5-15 0z" fill="#fff" stroke="#111" strokeWidth="1.500" /><circle cx="8.500" cy="8" r="3.500" fill="#111" /><circle cx="7.500" cy="7" r="1" fill="#fff" /><path d="M3 5L1.500 2.500M6 3.500L5 1M8.500 3V.5M11 3.500L12 1M14 5l1.500-2.500M2 12c4 3 9 3 13 0" stroke="#111" /></svg>
        <Gap $w={19} />
        <svg width="16" height="17" viewBox="0 0 16 17" fill="none"><path d="M5 5c0-5 7-5 7 0v4" stroke="#222" strokeWidth="1.500" /><path d="M3 8.500l9.500-1.500v8L3 16z" fill="#fff3a6" stroke="#222" /><path d="M7 10h2v1.500L8.500 14h-1L7 11.500z" fill="#111" /></svg>
        <Gap $w={10} />
        <Combo $w={79} $h={33}><LayerText>·Layer 1</LayerText><Down w={9} /></Combo>
        <Hint><b>Rectangle</b><Gap $w={9} />in layer <b>Layer 1</b>. Click selection to toggle scale/rotation handles (or Shift+s).</Hint>
        <VSep $m="0 10px 0 0" />
        <Coords>
          <CoordLine><span>X:</span><span>6.70</span></CoordLine>
          <CoordLine><span>Y:</span><span>3.59</span></CoordLine>
        </Coords>
        <Label $w={17}>Z:</Label>
        <SpinBox w={94} value="63%" step={21} right mr={12} />
        <Label $w={19}>R:</Label>
        <SpinBox w={101} value="0.00°" step={21} right />
      </Status>
    </Window>
  );
}
